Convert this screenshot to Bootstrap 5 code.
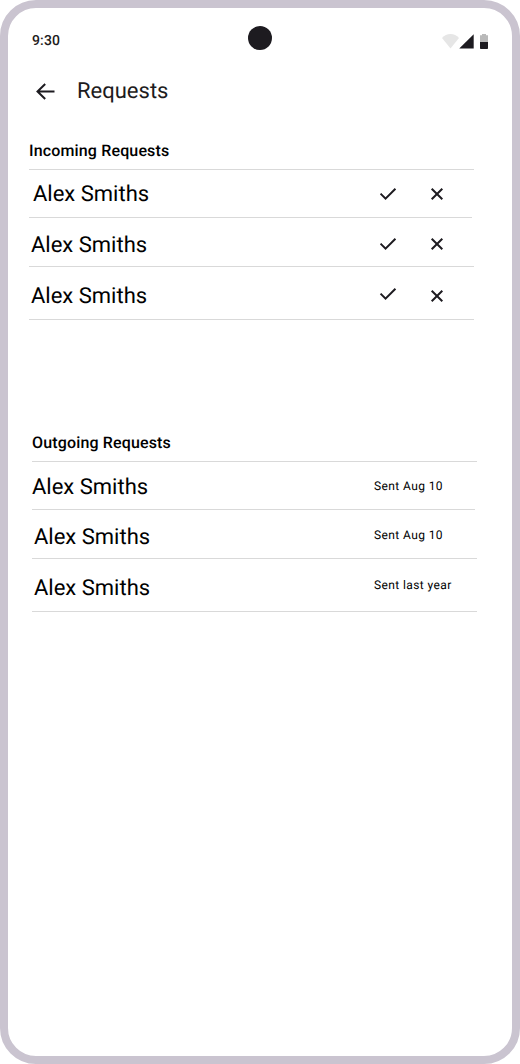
<!DOCTYPE html>
<html lang="en">
<head>
<meta charset="utf-8">
<meta name="viewport" content="width=device-width, initial-scale=1">
<title>Requests</title>
<link href="https://cdn.jsdelivr.net/npm/bootstrap@5.3.0/dist/css/bootstrap.min.css" rel="stylesheet">
<style>
body { font-family: Roboto, "Liberation Sans", sans-serif; color: #000; background: #fff; text-rendering: geometricPrecision; }
.phone { width: 520px; height: 1064px; border: 8px solid #cac4d0; border-radius: 36px; background: #fff; }
.status { height: 52px; padding: 0 24px; color: #1d1b20; }
.clock { font-size: 14px; line-height: 20px; font-weight: 500; letter-spacing: .14px; margin-top: 23px; }
.camera { width: 24px; height: 24px; background: #1d1b20; left: 240px; top: 18px; }
.signals { margin-top: 25px; }
.topbar { height: 62px; padding-left: 25px; color: #1d1b20; }
.topbar h1 { font-size: 22px; line-height: 28px; font-weight: 400; margin-left: 20px; padding-top: 2px; }
.requests { width: 445px; margin-left: 21px; }
.incoming { margin-top: 17px; }
.requests h2 { font-size: 16px; line-height: 24px; height: 30px; font-weight: 500; letter-spacing: .15px; margin: 0; }
.outgoing { margin: 111px 0 0 24px; }
.line-list { border-top: 1px solid #d9d9d9; }
.line-item { border-bottom: 1px solid #d9d9d9; height: 49px; padding-left: 2px; }
.line-item:first-child { width: 443px; height: 48px; padding-left: 4px; }
.line-item:last-child { height: 53px; }
.outgoing .line-item:first-child { padding-left: 0; }
.person { font-size: 22px; line-height: 28px; width: 345px; margin-top: 14px; }
.line-item:first-child .person { width: 343px; margin-top: 11px; }
.line-item:last-child .person { margin-top: 16px; }
.outgoing .person { width: 340px; }
.outgoing .line-item:first-child .person { width: 342px; margin-top: 12px; }
.action { width: 24px; height: 24px; color: #1d1b20; margin-top: 14px; }
.accept { margin-right: 25px; }
.line-item:first-child .action { margin-top: 12px; }
.line-item:last-child .accept { margin-top: 15px; }
.line-item:last-child .decline { margin-top: 17px; }
.sent { font-size: 12px; line-height: 16px; letter-spacing: .4px; margin-top: 17px; }
.line-item:first-child .sent { margin-top: 16px; }
.line-item:last-child .sent { margin-top: 18px; }
</style>
</head>
<body>
<svg class="d-none" aria-hidden="true">
  <symbol id="check" viewBox="0 0 24 24"><path fill="currentColor" d="M9.55 18 3.85 12.3l1.425-1.425L9.55 15.15l9.175-9.175L20.15 7.4z"/></symbol>
  <symbol id="close" viewBox="0 0 24 24"><path fill="none" stroke="currentColor" stroke-width="2" d="m6.7 6.7 10.6 10.6m0-10.6L6.7 17.3"/></symbol>
</svg>
<main class="phone position-relative overflow-hidden">
  <div class="status d-flex justify-content-between align-items-start">
    <div class="clock">9:30</div>
    <svg class="signals" width="47" height="17" viewBox="0 0 47 17">
      <path fill="#e6e6e6" d="M9.5 15.5 1 4.900C3.300 2.400 6.200 1 9.500 1S15.700 2.400 18 4.900z"/>
      <path fill="#1d1b20" d="M18.500 15.500v-.2L32.700 1.200v14.300z"/>
      <path fill="#b9b9b9" d="M39 9V2.300h2V1h4v1.300h2V9z"/>
      <path fill="#1d1b20" d="M39 9h8v6.200q0 .8-.8.8h-6.400q-.8 0-.8-.8z"/>
    </svg>
  </div>
  <div class="camera position-absolute rounded-circle"></div>
  <header class="topbar d-flex align-items-center">
    <svg width="24" height="24" viewBox="0 0 24 24"><path fill="none" stroke="currentColor" stroke-width="2" d="M12.200 5 4.500 12.500l7.700 7.500M4.500 12.500h17"/></svg>
    <h1 class="mb-0">Requests</h1>
  </header>
  <section class="requests incoming">
    <h2>Incoming Requests</h2>
    <div class="line-list">
      <div class="line-item d-flex align-items-start"><span class="person">Alex Smiths</span><svg class="action accept"><use href="#check"/></svg><svg class="action decline"><use href="#close"/></svg></div>
      <div class="line-item d-flex align-items-start"><span class="person">Alex Smiths</span><svg class="action accept"><use href="#check"/></svg><svg class="action decline"><use href="#close"/></svg></div>
      <div class="line-item d-flex align-items-start"><span class="person">Alex Smiths</span><svg class="action accept"><use href="#check"/></svg><svg class="action decline"><use href="#close"/></svg></div>
    </div>
  </section>
  <section class="requests outgoing">
    <h2>Outgoing Requests</h2>
    <div class="line-list">
      <div class="line-item d-flex align-items-start"><span class="person">Alex Smiths</span><span class="sent">Sent Aug 10</span></div>
      <div class="line-item d-flex align-items-start"><span class="person">Alex Smiths</span><span class="sent">Sent Aug 10</span></div>
      <div class="line-item d-flex align-items-start"><span class="person">Alex Smiths</span><span class="sent">Sent last year</span></div>
    </div>
  </section>
</main>
<script src="https://cdn.jsdelivr.net/npm/bootstrap@5.3.0/dist/js/bootstrap.bundle.min.js"></script>
</body>
</html>
